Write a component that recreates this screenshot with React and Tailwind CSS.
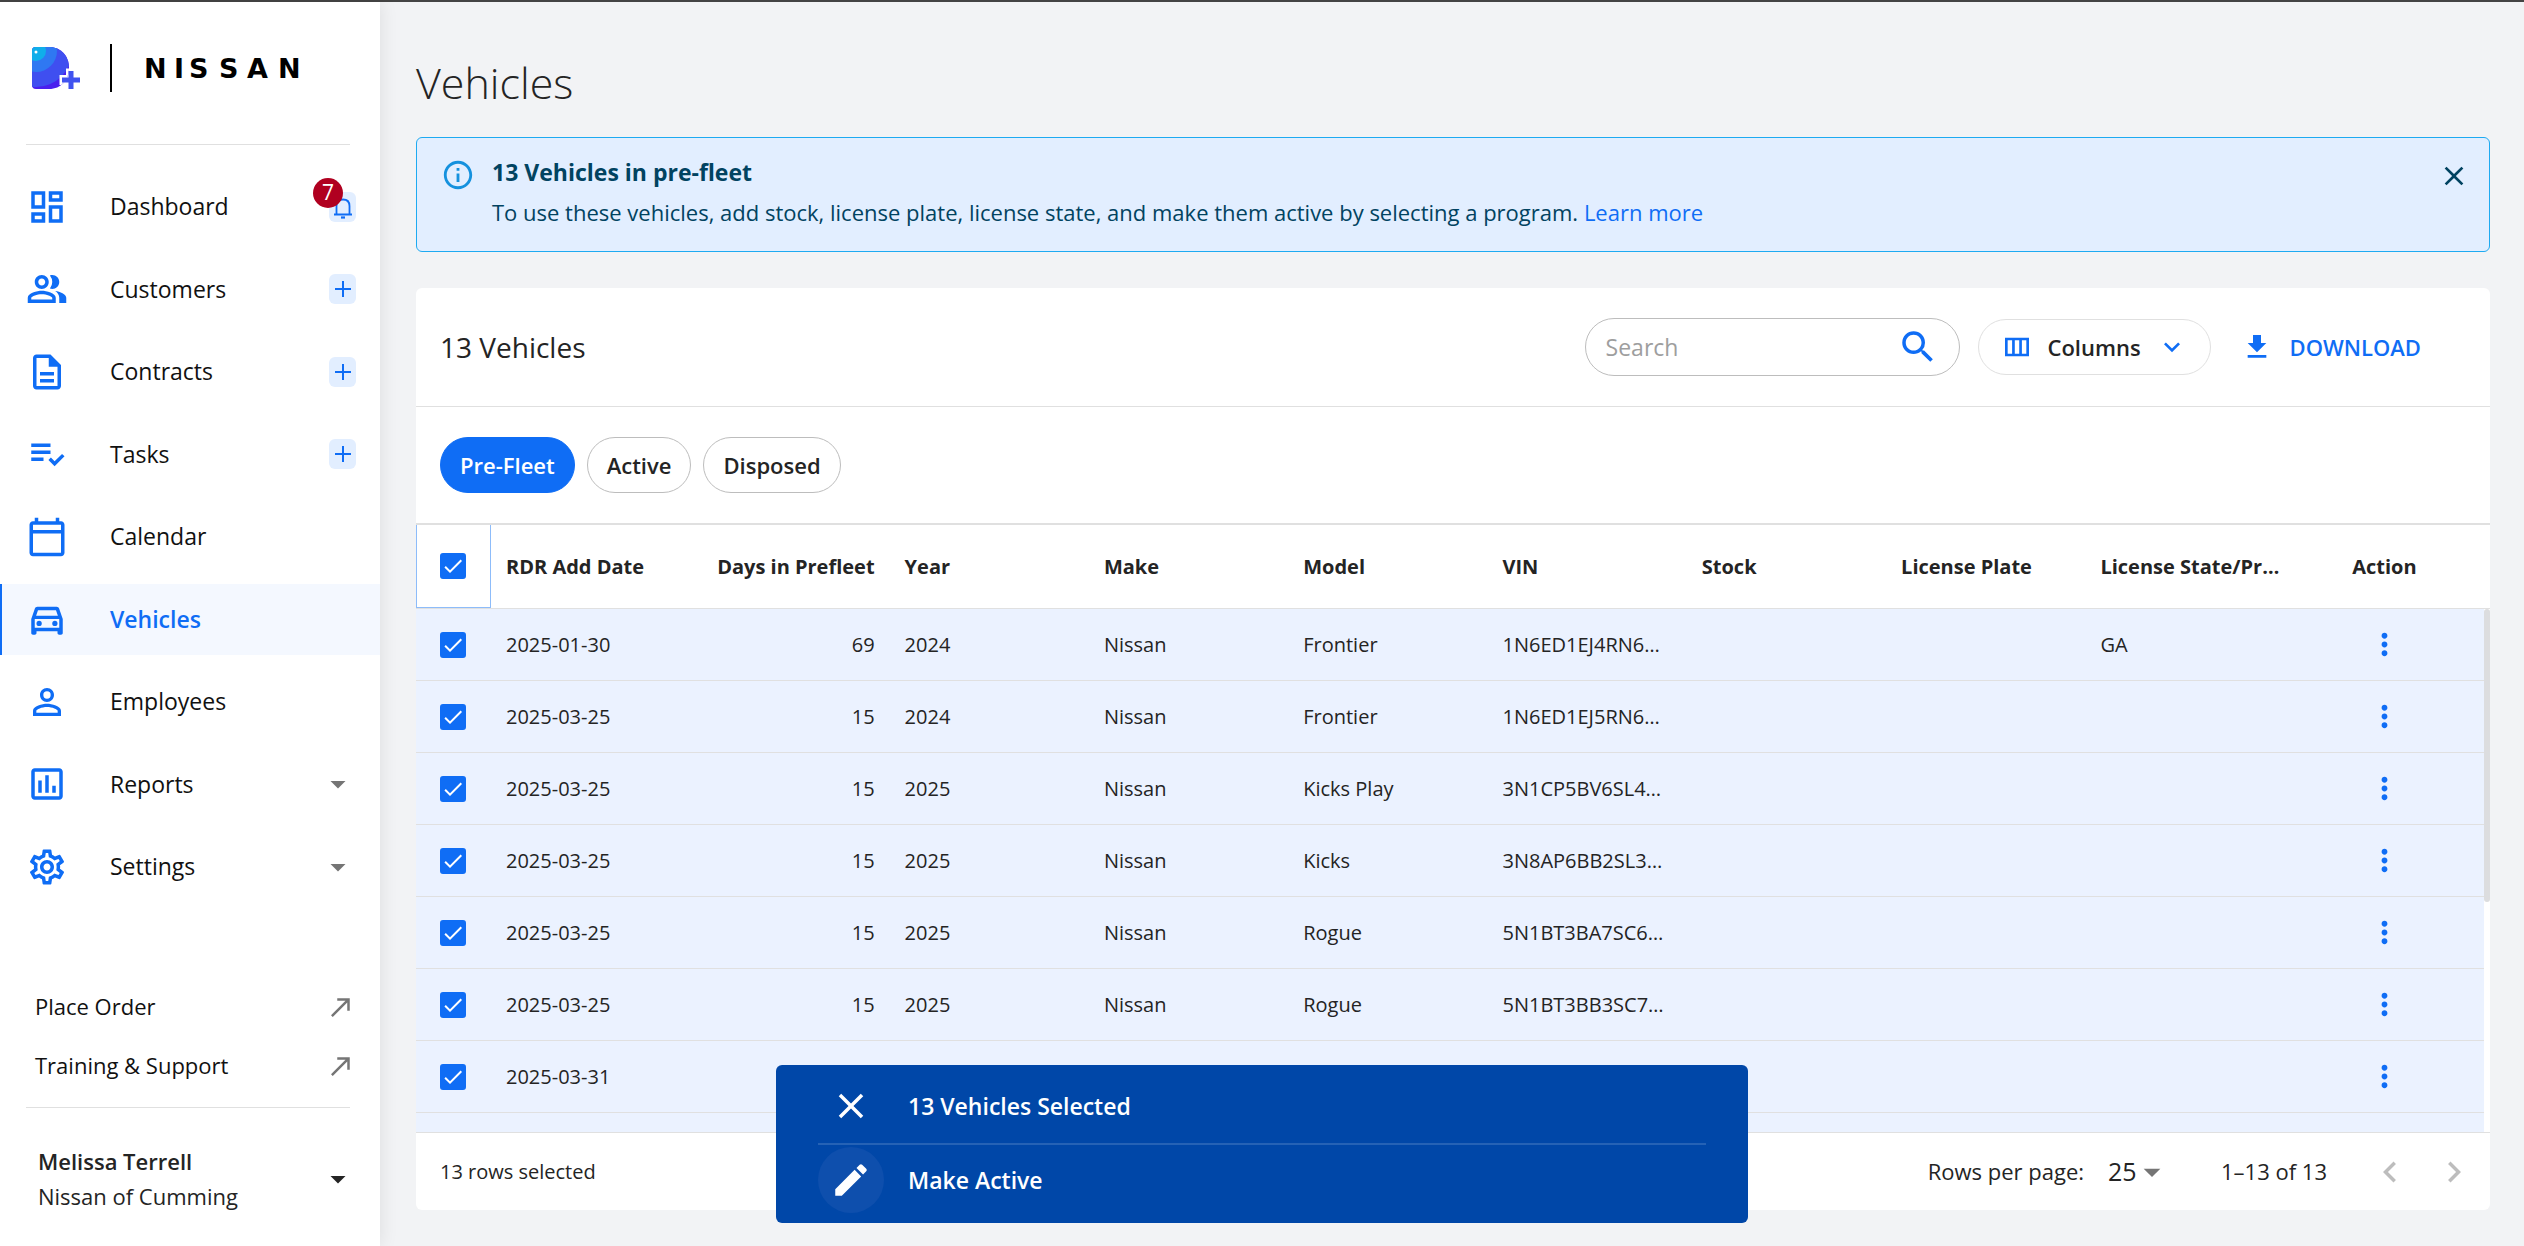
import { useState } from 'react';
import {
    MdArrowDropDown,
    MdCheck,
    MdClose,
    MdDownload,
    MdEdit,
    MdInfoOutline,
    MdKeyboardArrowDown,
    MdKeyboardArrowLeft,
    MdKeyboardArrowRight,
    MdMoreVert,
    MdNorthEast,
    MdOutlineAssessment,
    MdOutlineCalendarToday,
    MdOutlineDashboard,
    MdOutlineDescription,
    MdOutlineDirectionsCar,
    MdOutlinePeopleAlt,
    MdOutlineSettings,
    MdOutlineViewColumn,
    MdPersonOutline,
    MdPlaylistAddCheck,
    MdSearch,
} from 'react-icons/md';

const navItems = [
    { label: 'Dashboard', icon: MdOutlineDashboard, badge: 7 },
    { label: 'Customers', icon: MdOutlinePeopleAlt, add: true },
    { label: 'Contracts', icon: MdOutlineDescription, add: true },
    { label: 'Tasks', icon: MdPlaylistAddCheck, add: true },
    { label: 'Calendar', icon: MdOutlineCalendarToday },
    { label: 'Vehicles', icon: MdOutlineDirectionsCar, active: true },
    { label: 'Employees', icon: MdPersonOutline },
    { label: 'Reports', icon: MdOutlineAssessment, expand: true },
    { label: 'Settings', icon: MdOutlineSettings, expand: true },
];

const columns = ['RDR Add Date', 'Days in Prefleet', 'Year', 'Make', 'Model', 'VIN', 'Stock', 'License Plate', 'License State/Pr…', 'Action'];

const vehicles = [
    { id: 1, added: '2025-01-30', days: '69', year: '2024', make: 'Nissan', model: 'Frontier', vin: '1N6ED1EJ4RN6…', state: 'GA' },
    { id: 2, added: '2025-03-25', days: '15', year: '2024', make: 'Nissan', model: 'Frontier', vin: '1N6ED1EJ5RN6…' },
    { id: 3, added: '2025-03-25', days: '15', year: '2025', make: 'Nissan', model: 'Kicks Play', vin: '3N1CP5BV6SL4…' },
    { id: 4, added: '2025-03-25', days: '15', year: '2025', make: 'Nissan', model: 'Kicks', vin: '3N8AP6BB2SL3…' },
    { id: 5, added: '2025-03-25', days: '15', year: '2025', make: 'Nissan', model: 'Rogue', vin: '5N1BT3BA7SC6…' },
    { id: 6, added: '2025-03-25', days: '15', year: '2025', make: 'Nissan', model: 'Rogue', vin: '5N1BT3BB3SC7…' },
    { id: 7, added: '2025-03-31' },
    { id: 8 },
];

function BrandMark() {
    return (
        <svg width="48" height="43" viewBox="0 0 48 43" aria-hidden="true">
            <defs>
                <clipPath id="mark">
                    <path d="M4 0H17C29 0 37 9 37 21C37 33 29 42 17 42H4Q0 42 0 38V4Q0 0 4 0Z" />
                </clipPath>
            </defs>
            <g clipPath="url(#mark)">
                <rect width="48" height="43" fill="#4a20ee" />
                <circle cx="4" cy="4" r="36" fill="#3f4ff0" />
                <circle cx="4" cy="4" r="21" fill="#2f78f2" />
                <circle cx="4" cy="4" r="10" fill="#10aeea" />
                <circle cx="4" cy="5" r="1.5" fill="#fff" />
                <path d="M39 21.500V42M27.500 33H48" stroke="#fff" strokeWidth="10" />
            </g>
            <path d="M39 24V42M30 33H48" stroke="#4053f0" strokeWidth="5" />
        </svg>
    );
}

function Wordmark() {
    return (
        <svg width="166" height="40" viewBox="0 0 166 40" role="img" aria-label="Nissan">
            <text x="2 32 47 77 105 136" y="30" className="fill-black font-['DejaVu_Sans'] text-[27px] font-bold">
                NISSAN
            </text>
        </svg>
    );
}

function BellIcon() {
    return (
        <svg width="20" height="24" viewBox="0 0 20 24" fill="none" stroke="#0f6df5" strokeWidth="1.8" aria-hidden="true">
            <path d="M1 19.500H19M3.500 19.500V11C3.500 7 6 4.500 10 4.500S16.500 7 16.500 11V19.500" />
            <path d="M8 22.500H12" strokeWidth="2.200" />
        </svg>
    );
}

function Checkbox({ label, checked, onChange }) {
    return (
        <label className="inline-grid align-middle">
            <input
                type="checkbox"
                aria-label={label}
                checked={checked}
                onChange={onChange}
                className="col-start-1 row-start-1 size-[26px] appearance-none rounded-[3px] border-2 border-[#0f6df5] checked:bg-[#0f6df5]"
            />
            {checked && <MdCheck className="pointer-events-none col-start-1 row-start-1 m-auto size-6 text-white" />}
        </label>
    );
}

function NavItem({ item }) {
    const Icon = item.icon;

    return (
        <a
            href="#"
            className={
                item.active
                    ? 'flex h-[71px] items-center border-l-2 border-[#0f6df5] bg-[#f4f8ff] pr-6 pl-6 text-[23px] font-semibold text-[#0f6df5]'
                    : 'flex h-[71px] items-center border-l-2 border-transparent pr-6 pl-6 text-[23px] text-[#111111]'
            }
        >
            <Icon className="size-[42px] text-[#0f6df5]" />
            <span className="ml-[42px] flex-1">{item.label}</span>
            {item.badge && (
                <span className="relative flex h-[30px] w-[27px] items-center justify-center rounded-md bg-[#e2eeff]">
                    <BellIcon />
                    <span className="absolute -top-3.5 -left-4 flex size-[30px] items-center justify-center rounded-full bg-[#b00020] text-[21px] text-white">
                        {item.badge}
                    </span>
                </span>
            )}
            {item.add && (
                <span className="flex h-[30px] w-[27px] items-center justify-center rounded-md bg-[#e2eeff]">
                    <svg width="16" height="16" viewBox="0 0 16 16" stroke="#0f6df5" strokeWidth="2" aria-hidden="true">
                        <path d="M8 0V16M0 8H16" />
                    </svg>
                </span>
            )}
            {item.expand && <MdArrowDropDown className="size-9 text-[#757575]" />}
        </a>
    );
}

function Sidebar() {
    return (
        <aside className="z-10 flex w-[380px] shrink-0 flex-col bg-white shadow-[2px_0_16px_rgba(0,0,0,0.08)]">
            <div className="mr-[30px] ml-[26px] flex h-[143px] items-start border-b border-[#e0e0e0] pt-[42px] pl-1.5">
                <div className="flex h-12 items-center">
                    <BrandMark />
                    <span className="mr-[30px] ml-[30px] h-12 w-[2px] bg-black" />
                    <Wordmark />
                </div>
            </div>

            <nav className="mt-[26px] flex flex-1 flex-col justify-between">
                {navItems.map((item) => (
                    <NavItem item={item} key={item.label} />
                ))}
            </nav>

            <div className="mt-[75px] mr-[30px] ml-[26px] border-b border-[#e0e0e0] pb-3 text-[22px] text-[#111111]">
                <a href="#" className="flex h-[59px] items-center justify-between pl-[9px]">
                    Place Order
                    <MdNorthEast className="-mr-1.5 size-[30px] text-[#757575]" />
                </a>
                <a href="#" className="flex h-[59px] items-center justify-between pl-[9px]">
                    Training &amp; Support
                    <MdNorthEast className="-mr-1.5 size-[30px] text-[#757575]" />
                </a>
            </div>

            <button type="button" className="mt-9 mb-8 flex items-center justify-between pr-6 pl-[38px] text-left text-[22px] leading-[35px] text-[#242424]">
                <span>
                    <span className="block font-semibold">Melissa Terrell</span>
                    <span className="block">Nissan of Cumming</span>
                </span>
                <MdArrowDropDown className="size-9" />
            </button>
        </aside>
    );
}

function PrefleetAlert({ onClose }) {
    return (
        <div role="alert" className="mt-6 flex items-start rounded-md border border-[#1eaaf1] bg-[#e2eeff] pt-4 pr-[19px] pb-5 pl-6 text-[#014361]">
            <MdInfoOutline className="mt-1 size-[34px] text-[#1591de]" />
            <div className="ml-[17px] flex-1">
                <p className="text-[23px] leading-9 font-bold">13 Vehicles in pre-fleet</p>
                <p className="mt-1 text-[22px] leading-[37px]">
                    To use these vehicles, add stock, license plate, license state, and make them active by selecting a program.{' '}
                    <a href="#" className="text-[#0f6df5]">Learn more</a>
                </p>
            </div>
            <button type="button" aria-label="Close" onClick={onClose} className="mt-1.5">
                <MdClose className="size-8" />
            </button>
        </div>
    );
}

function Toolbar() {
    const [search, setSearch] = useState('');

    return (
        <div className="flex h-[119px] shrink-0 items-center border-b border-[#e0e0e0] pr-[69px] pl-6">
            <h2 className="flex-1 text-[28px]">13 Vehicles</h2>
            <div className="flex h-[58px] w-[375px] items-center rounded-full border border-[#bdbdbd] pr-5 pl-5">
                <input
                    type="text"
                    aria-label="Search"
                    placeholder="Search"
                    value={search}
                    onChange={(e) => setSearch(e.target.value)}
                    className="w-full min-w-0 flex-1 text-[23px] outline-none placeholder:text-[#9e9e9e]"
                />
                <MdSearch className="size-[42px] text-[#0f6df5]" />
            </div>
            <button type="button" className="ml-[18px] flex h-14 w-[233px] items-center justify-between rounded-full border border-[#e0e0e0] px-[22px] text-[22px] font-semibold">
                <MdOutlineViewColumn className="size-8 text-[#0f6df5]" />
                <span>Columns</span>
                <MdKeyboardArrowDown className="size-8 text-[#0f6df5]" />
            </button>
            <button type="button" className="ml-[30px] flex items-center gap-[17px] text-[22px] font-semibold text-[#0f6df5]">
                <MdDownload className="size-8" />
                DOWNLOAD
            </button>
        </div>
    );
}

function StatusTabs() {
    const [tab, setTab] = useState('Pre-Fleet');

    return (
        <div className="flex shrink-0 gap-3 border-b-2 border-[#e0e0e0] py-[30px] pl-6">
            {['Pre-Fleet', 'Active', 'Disposed'].map((name) => (
                <button
                    type="button"
                    key={name}
                    onClick={() => setTab(name)}
                    className={
                        tab === name
                            ? 'h-14 rounded-full border border-[#0f6df5] bg-[#0f6df5] px-[19px] text-[22px] font-semibold text-white'
                            : 'h-14 rounded-full border border-[#bdbdbd] px-[19px] text-[22px] font-semibold'
                    }
                >
                    {name}
                </button>
            ))}
        </div>
    );
}

function VehiclesTable() {
    const [selected, setSelected] = useState(vehicles.map((v) => v.id));

    const toggle = (id) => {
        setSelected(selected.includes(id) ? selected.filter((s) => s !== id) : [...selected, id]);
    };

    const toggleAll = () => {
        setSelected(selected.length ? [] : vehicles.map((v) => v.id));
    };

    return (
        <div className="relative min-h-0 flex-1 overflow-hidden pr-1.5">
            <table className="w-full table-fixed border-separate border-spacing-0 text-[20px]">
                <thead>
                    <tr className="h-[84px]">
                        <th className="w-[75px] border-b border-[#e0e0e0] p-0">
                            <div className="flex h-[83px] items-center border-x border-b border-[#8dbcfa] pl-[23px]">
                                <Checkbox label="Select all rows" checked={selected.length > 0} onChange={toggleAll} />
                            </div>
                        </th>
                        {columns.map((name) => (
                            <th
                                key={name}
                                className={
                                    name === 'Action'
                                        ? 'border-b border-[#e0e0e0] px-[15px] text-center font-bold whitespace-nowrap'
                                        : name === 'Days in Prefleet'
                                          ? 'border-b border-[#e0e0e0] px-[15px] text-right font-bold whitespace-nowrap'
                                          : 'border-b border-[#e0e0e0] px-[15px] text-left font-bold whitespace-nowrap'
                                }
                            >
                                {name}
                            </th>
                        ))}
                    </tr>
                </thead>
                <tbody className="bg-[#ebf2ff]">
                    {vehicles.map((v) => (
                        <tr className="h-[72px] *:border-b *:border-[#e0e0e0] *:px-[15px] *:py-0" key={v.id}>
                            <td>
                                <span className="flex pl-[9px]">
                                    <Checkbox label="Select row" checked={selected.includes(v.id)} onChange={() => toggle(v.id)} />
                                </span>
                            </td>
                            <td>{v.added}</td>
                            <td className="text-right">{v.days}</td>
                            <td>{v.year}</td>
                            <td>{v.make}</td>
                            <td>{v.model}</td>
                            <td className="whitespace-nowrap">{v.vin}</td>
                            <td>{v.stock}</td>
                            <td>{v.plate}</td>
                            <td>{v.state}</td>
                            <td>
                                <button type="button" aria-label="Row actions" className="mx-auto block">
                                    <MdMoreVert className="size-[35px] text-[#0f6df5]" />
                                </button>
                            </td>
                        </tr>
                    ))}
                </tbody>
            </table>
            <div className="absolute top-[83px] right-0 bottom-0 w-1.5 border-t border-[#e0e0e0] bg-white">
                <div className="h-[56%] rounded-full bg-[#dcdddf]" />
            </div>
        </div>
    );
}

function TableFooter() {
    return (
        <div className="flex h-[78px] shrink-0 items-center border-t border-[#e0e0e0] pr-[15px] pl-6 text-[22px]">
            <span className="flex-1 text-[20px]">13 rows selected</span>
            <label htmlFor="rows-per-page">Rows per page:</label>
            <div className="ml-6 grid items-center">
                <select id="rows-per-page" defaultValue="25" className="col-start-1 row-start-1 w-[60px] appearance-none text-[25px]">
                    <option>25</option>
                    <option>50</option>
                    <option>100</option>
                </select>
                <MdArrowDropDown className="pointer-events-none col-start-1 row-start-1 -mr-1 size-10 justify-self-end text-[#757575]" />
            </div>
            <span className="ml-[53px]">1–13 of 13</span>
            <button type="button" aria-label="Previous page" className="ml-[42px] text-[#bdbdbd]">
                <MdKeyboardArrowLeft className="size-[42px]" />
            </button>
            <button type="button" aria-label="Next page" className="ml-[22px] text-[#bdbdbd]">
                <MdKeyboardArrowRight className="size-[42px]" />
            </button>
        </div>
    );
}

function SelectionBar() {
    return (
        <div className="fixed bottom-[23px] left-1/2 z-20 w-[972px] -translate-x-1/2 rounded-md bg-[#0047a8] px-[42px] text-[23px] font-semibold text-white">
            <div className="flex h-20 items-center border-b-2 border-[#2562b5] pt-1">
                <button type="button" aria-label="Clear selection" className="flex w-[66px] justify-center">
                    <MdClose className="size-[42px]" />
                </button>
                <span className="ml-6">13 Vehicles Selected</span>
            </div>
            <button type="button" className="flex h-[78px] w-full items-start pt-0.5">
                <span className="flex size-[66px] items-center justify-center rounded-full bg-[#0e4fad]">
                    <MdEdit className="size-[42px]" />
                </span>
                <span className="ml-6 leading-[66px]">Make Active</span>
            </button>
        </div>
    );
}

export default function App() {
    const [showAlert, setShowAlert] = useState(true);

    return (
        <div className="flex h-screen min-h-[1000px] border-t-2 border-[#444444] bg-[#f2f3f5] font-['Open_Sans',sans-serif] text-[#242424]">
            <Sidebar />
            <main className="flex min-w-0 flex-1 flex-col pt-[51px] pr-[34px] pb-9 pl-9">
                <h1 className="text-[43px] leading-[60px] font-light">Vehicles</h1>
                {showAlert && <PrefleetAlert onClose={() => setShowAlert(false)} />}
                <section className="mt-9 flex min-h-0 flex-1 flex-col rounded-md bg-white">
                    <Toolbar />
                    <StatusTabs />
                    <VehiclesTable />
                    <TableFooter />
                </section>
            </main>
            <SelectionBar />
        </div>
    );
}
